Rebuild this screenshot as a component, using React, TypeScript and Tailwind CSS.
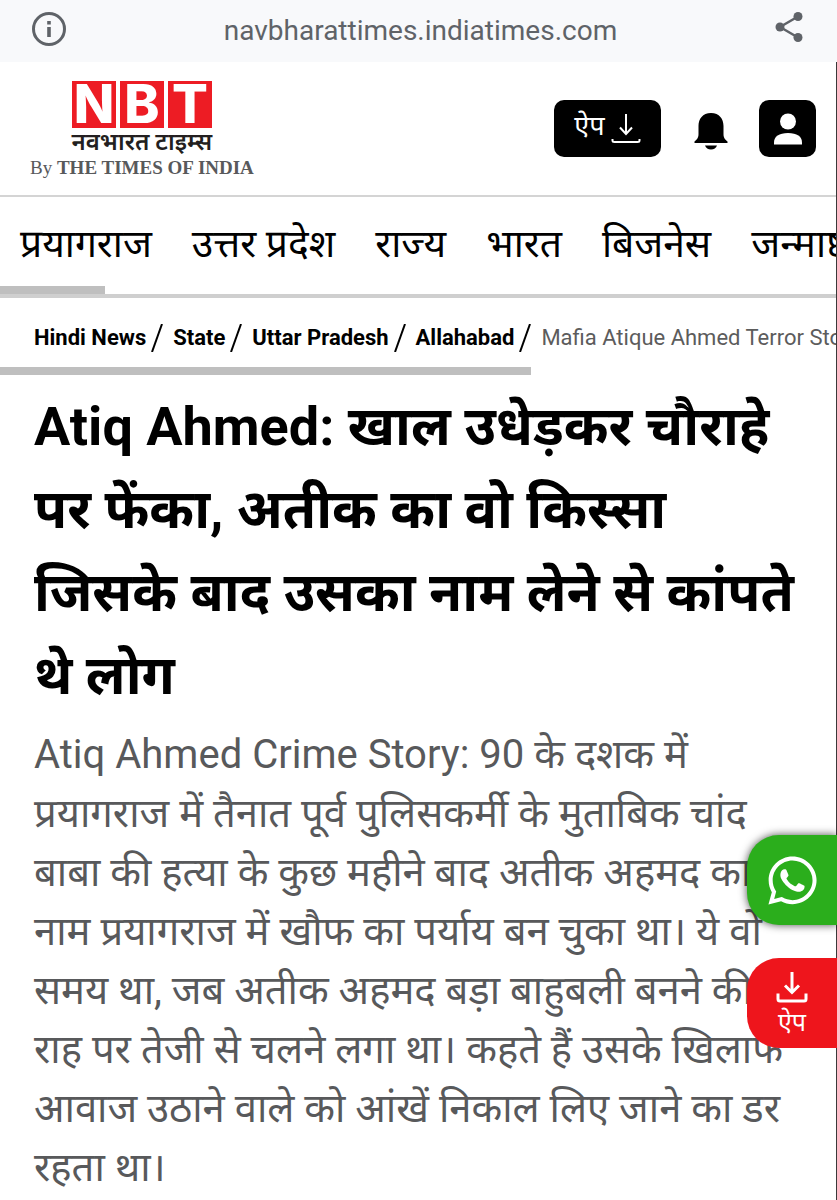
import React from 'react';
import { FaWhatsapp } from 'react-icons/fa';

const navItems = ['प्रयागराज', 'उत्तर प्रदेश', 'राज्य', 'भारत', 'बिजनेस', 'जन्माष्टमी'];

const crumbs = ['Hindi News', 'State', 'Uttar Pradesh', 'Allahabad'];

const InfoIcon = () => (
  <svg viewBox="0 0 34 34" className="size-[34px]" fill="none" stroke="#5f6368" aria-hidden="true">
    <circle cx="17" cy="17" r="15.5" strokeWidth="3" />
    <path d="M17 15v10M17 9v3.500" strokeWidth="3.600" />
  </svg>
);

const ShareIcon = () => (
  <svg viewBox="0 0 28 32" className="h-8 w-7" fill="#5f6368" stroke="#5f6368" aria-hidden="true">
    <path d="M5 16 23 5.500M5 16l18 10.500" strokeWidth="2.600" />
    <circle cx="5" cy="16" r="4.500" stroke="none" />
    <circle cx="23" cy="5.500" r="4.500" stroke="none" />
    <circle cx="23" cy="26.500" r="4.500" stroke="none" />
  </svg>
);

const AddressBar = () => (
  <div className="flex h-[62px] items-center justify-between bg-[#f8f9fb] pr-[34px] pb-1 pl-8">
    <button aria-label="Site information">
      <InfoIcon />
    </button>
    <span className="pt-1 text-[28px] text-[#5f6368]">navbharattimes.indiatimes.com</span>
    <button aria-label="Share" className="pb-1">
      <ShareIcon />
    </button>
  </div>
);

const Logo = () => (
  <a href="#" className="flex flex-col items-center pt-1">
    <span className="flex gap-1 font-[Inter,sans-serif]">
      {['N', 'B', 'T'].map((letter) => (
        <span
          key={letter}
          className="flex h-[47px] w-11 items-center justify-center bg-[#ed1c24] text-[53px] leading-[47px] font-extrabold text-white"
        >
          {letter}
        </span>
      ))}
    </span>
    <span className="text-[24px] leading-7 font-semibold text-[#231f20]">नवभारत टाइम्स</span>
    <span className="font-['Liberation_Serif',serif] text-[19px] leading-6 text-[#58595b]">
      By <b>THE TIMES OF INDIA</b>
    </span>
  </a>
);

const Header = () => (
  <header className="flex h-[135px] items-center justify-between border-b-2 border-[#d4d4d4] pr-5 pl-[30px]">
    <Logo />
    <div className="flex items-center">
      <button className="flex h-[57px] w-[107px] items-center justify-center gap-[6px] rounded-[10px] bg-black text-[27px] text-white">
        <span className="pb-1">ऐप</span>
        <svg viewBox="0 0 30 32" className="h-8 w-[30px]" fill="none" stroke="white" strokeWidth="2" aria-hidden="true">
          <path d="M15 1v20M9 14.500l6 6.500 6-6.500M1.500 26v1.500q0 1.500 2 1.500h23q2 0 2-1.500V26" />
        </svg>
      </button>
      <button aria-label="Notifications" className="mr-[30px] ml-8 pt-1">
        <svg viewBox="0 0 36 38" className="h-[38px] w-9" aria-hidden="true">
          <path d="M18 1C9.500 1 5.500 7 5.500 14v8c0 4-1.500 5.500-4 7.500V31h33v-1.500c-2.500-2-4-3.500-4-7.500v-8C30.500 7 26.500 1 18 1Z" />
          <path d="M12 33.500h12c-1 2.500-3 4-6 4s-5-1.500-6-4Z" />
        </svg>
      </button>
      <button aria-label="Account" className="flex size-[57px] items-center justify-center rounded-[10px] bg-black">
        <svg viewBox="0 0 28 32" className="h-8 w-7" fill="white" aria-hidden="true">
          <circle cx="14" cy="8.500" r="8" />
          <path d="M0 31.500v-2c0-6 5-9.500 14-9.500s14 3.500 14 9.500v2Z" />
        </svg>
      </button>
    </div>
  </header>
);

const TopNav = () => (
  <nav className="border-b-4 border-[#cfcfcf]">
    <ul className="flex h-[89px] items-center gap-10 overflow-hidden pt-[6px] pl-5 text-[39px] whitespace-nowrap">
      {navItems.map((item) => (
        <li key={item}>
          <a href="#">{item}</a>
        </li>
      ))}
    </ul>
    {/* scroll position */}
    <div className="h-2 w-1/8 bg-[#bfbfbf]" />
  </nav>
);

const Breadcrumb = () => (
  <nav aria-label="Breadcrumb">
    <ol className="flex h-[69px] items-center overflow-hidden pt-[10px] pl-[34px] text-[22px] whitespace-nowrap">
      {crumbs.map((crumb) => (
        <li key={crumb} className="flex items-center font-bold">
          <a href="#">{crumb}</a>
          <svg viewBox="0 0 12 28" className="mr-[10px] ml-[5px] h-7 w-3" stroke="black" strokeWidth="2" aria-hidden="true">
            <path d="M1 28 11 0" />
          </svg>
        </li>
      ))}
      <li className="text-[#5c5c5c]">Mafia Atique Ahmed Terror Story</li>
    </ol>
    <div className="h-2 w-[63.5%] bg-[#bfbfbf]" />
  </nav>
);

const FloatingButtons = () => (
  <aside className="absolute top-[835px] right-0 flex flex-col gap-[33px]">
    <button
      aria-label="WhatsApp"
      className="flex h-[90px] w-[90px] items-center justify-center rounded-l-[32px] bg-[#2bae1c] text-white shadow-[0_0_8px_rgba(0,0,0,0.7)]"
    >
      <FaWhatsapp size={55} />
    </button>
    <button className="flex h-[90px] w-[90px] flex-col items-center justify-center gap-1 rounded-l-[32px] bg-[#ee151c] pt-1 text-[25px] leading-8 text-white">
      <svg viewBox="0 0 32 32" className="size-8" fill="none" stroke="white" strokeWidth="3" aria-hidden="true">
        <path d="M16 1v20M9 14.500l7 7 7-7M2 22.500V28q0 2 2 2h24q2 0 2-2v-5.500" />
      </svg>
      ऐप
    </button>
  </aside>
);

const App = () => {
  return (
    <div className="relative overflow-hidden bg-white font-['Roboto','Noto_Sans_Devanagari','Noto_Sans',sans-serif] text-black">
      <AddressBar />
      <div className="border-r border-[#3a3a3a]">
        <Header />
        <TopNav />
        <Breadcrumb />
        <main className="px-[34px] pt-[10px] pb-1">
          <h1 className="text-[54px] leading-[83px] font-bold">
            Atiq Ahmed: खाल उधेड़कर चौराहे पर फेंका, अतीक का वो किस्सा जिसके बाद उसका नाम लेने से कांपते थे लोग
          </h1>
          <p className="pt-2 text-[40px] leading-[59px] text-[#58595b]">
            Atiq Ahmed Crime Story: 90 के दशक में प्रयागराज में तैनात पूर्व पुलिसकर्मी के मुताबिक चांद बाबा की हत्या के कुछ महीने बाद अतीक अहमद का नाम प्रयागराज में खौफ का पर्याय बन चुका था। ये वो समय था, जब अतीक अहमद बड़ा बाहुबली बनने की राह पर तेजी से चलने लगा था। कहते हैं उसके खिलाफ आवाज उठाने वाले को आंखें निकाल लिए जाने का डर रहता था।
          </p>
        </main>
      </div>
      <FloatingButtons />
    </div>
  );
};

export default App;
